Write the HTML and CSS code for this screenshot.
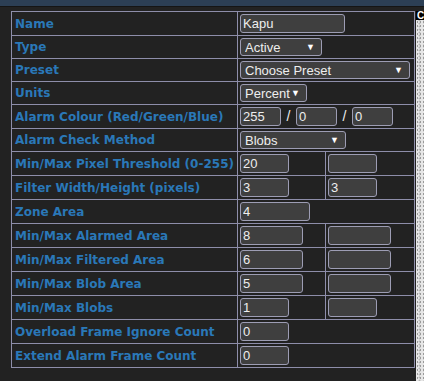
FILE: index.html
```html
<!DOCTYPE html>
<html lang="en">
<head>
    <meta charset="UTF-8">
    <meta name="viewport" content="width=device-width, initial-scale=1.0">
    <title>Zone</title>
    <link rel="stylesheet" href="styles.css">
</head>
<body>
    <div class="topbar"></div>

    <div class="page">
        <div class="main">
            <table class="zone-table">
                <colgroup>
                    <col class="col-label">
                    <col class="col-min">
                    <col class="col-max">
                </colgroup>
                <tr>
                    <th>Name</th>
                    <td colspan="2"><input type="text" class="w-name" value="Kapu"></td>
                </tr>
                <tr>
                    <th>Type</th>
                    <td colspan="2"><span class="select-wrap w-type"><select><option>Active</option></select></span></td>
                </tr>
                <tr>
                    <th>Preset</th>
                    <td colspan="2"><span class="select-wrap w-preset"><select><option>Choose Preset</option></select></span></td>
                </tr>
                <tr>
                    <th>Units</th>
                    <td colspan="2"><span class="select-wrap w-units"><select><option>Percent</option></select></span></td>
                </tr>
                <tr>
                    <th>Alarm Colour (Red/Green/Blue)</th>
                    <td colspan="2">
                        <div class="rgb">
                            <input type="text" class="w-rgb" value="255"><span class="slash">/</span><input type="text" class="w-rgb" value="0"><span class="slash">/</span><input type="text" class="w-rgb" value="0">
                        </div>
                    </td>
                </tr>
                <tr>
                    <th>Alarm Check Method</th>
                    <td colspan="2"><span class="select-wrap w-method"><select><option>Blobs</option></select></span></td>
                </tr>
                <tr>
                    <th>Min/Max Pixel Threshold (0-255)</th>
                    <td><input type="text" class="w-sm" value="20"></td>
                    <td><input type="text" class="w-sm" value=""></td>
                </tr>
                <tr>
                    <th>Filter Width/Height (pixels)</th>
                    <td><input type="text" class="w-sm" value="3"></td>
                    <td><input type="text" class="w-sm" value="3"></td>
                </tr>
                <tr>
                    <th>Zone Area</th>
                    <td colspan="2"><input type="text" class="w-lg" value="4"></td>
                </tr>
                <tr>
                    <th>Min/Max Alarmed Area</th>
                    <td><input type="text" class="w-md" value="8"></td>
                    <td><input type="text" class="w-md" value=""></td>
                </tr>
                <tr>
                    <th>Min/Max Filtered Area</th>
                    <td><input type="text" class="w-md" value="6"></td>
                    <td><input type="text" class="w-md" value=""></td>
                </tr>
                <tr>
                    <th>Min/Max Blob Area</th>
                    <td><input type="text" class="w-md" value="5"></td>
                    <td><input type="text" class="w-md" value=""></td>
                </tr>
                <tr>
                    <th>Min/Max Blobs</th>
                    <td><input type="text" class="w-sm" value="1"></td>
                    <td><input type="text" class="w-sm" value=""></td>
                </tr>
                <tr>
                    <th>Overload Frame Ignore Count</th>
                    <td colspan="2"><input type="text" class="w-sm" value="0"></td>
                </tr>
                <tr>
                    <th>Extend Alarm Frame Count</th>
                    <td colspan="2"><input type="text" class="w-sm" value="0"></td>
                </tr>
            </table>
        </div>

        <div class="side">
            <div class="side-title">C</div>
            <div class="side-image"></div>
        </div>
    </div>
</body>
</html>
```

FILE: styles.css
```css
html, body {
    height: 100%;
}

body {
    margin: 0;
    background-color: #222;
    font-family: 'Liberation Sans', Arial, sans-serif;
    font-size: 13px;
    color: #eee;
    overflow: hidden;
    display: flex;
    flex-direction: column;
}

.topbar {
    height: 6px;
    background-color: #2c3f55;
    border-bottom: 1px solid #151515;
}

.page {
    flex: 1;
    display: flex;
}

.main {
    width: 416px;
    padding: 4px 0 0 11px;
    box-sizing: border-box;
}

.zone-table {
    border-collapse: collapse;
    width: 404px;
    table-layout: fixed;
}

.col-label {
    width: 226px;
}

.col-min {
    width: 88px;
}

.zone-table th,
.zone-table td {
    border: 1px solid #8e8eaa;
    padding: 2px 0 2px 2px;
    vertical-align: middle;
    white-space: nowrap;
    line-height: 14px;
}

.zone-table th {
    padding-left: 3px;
    text-align: left;
    font-family: 'DejaVu Sans', Verdana, sans-serif;
    font-size: 12px;
    font-weight: bold;
    color: #2a78b8;
}

input,
select {
    display: block;
    height: 19px;
    box-sizing: border-box;
    margin: 0;
    padding: 0 2px;
    background-color: #3f3f3f;
    border: 1px solid #9d9db4;
    border-radius: 3px;
    color: #eee;
    font-family: 'Liberation Sans', Arial, sans-serif;
    font-size: 13px;
    outline: none;
}

.rgb {
    display: flex;
    align-items: center;
}

.slash {
    width: 15px;
    text-align: center;
    line-height: 19px;
    font-size: 14px;
}

.select-wrap {
    position: relative;
    display: block;
    height: 18px;
}

.select-wrap select {
    width: 100%;
    height: 18px;
    padding-left: 4px;
    appearance: none;
    -webkit-appearance: none;
}

.select-wrap::after {
    content: '▼';
    position: absolute;
    top: 5px;
    right: 7px;
    font-size: 9px;
    line-height: 8px;
    color: #fff;
    pointer-events: none;
}

.w-name { width: 105px; }
.w-type { width: 82px; }
.w-preset { width: 170px; }
.w-units { width: 67px; }
.w-method { width: 106px; }
.w-rgb { width: 41px; }
.w-sm { width: 49px; }
.w-md { width: 63px; }
.w-lg { width: 70px; }

.side {
    flex: 1;
    padding-top: 4px;
    overflow: hidden;
    display: flex;
    flex-direction: column;
}

.side-title {
    height: 9px;
    background-color: #000;
    color: #fff;
    font-size: 10px;
    line-height: 9px;
    font-weight: bold;
    padding-left: 1px;
    white-space: nowrap;
}

.side-image {
    flex: 1;
    background:
        radial-gradient(circle, #9a9a9a 0.6px, transparent 1px) 0 0 / 3px 4px,
        radial-gradient(circle, #b8b8b8 0.7px, transparent 1.2px) 1px 2px / 5px 3px,
        #e6e6e6;
}
```
